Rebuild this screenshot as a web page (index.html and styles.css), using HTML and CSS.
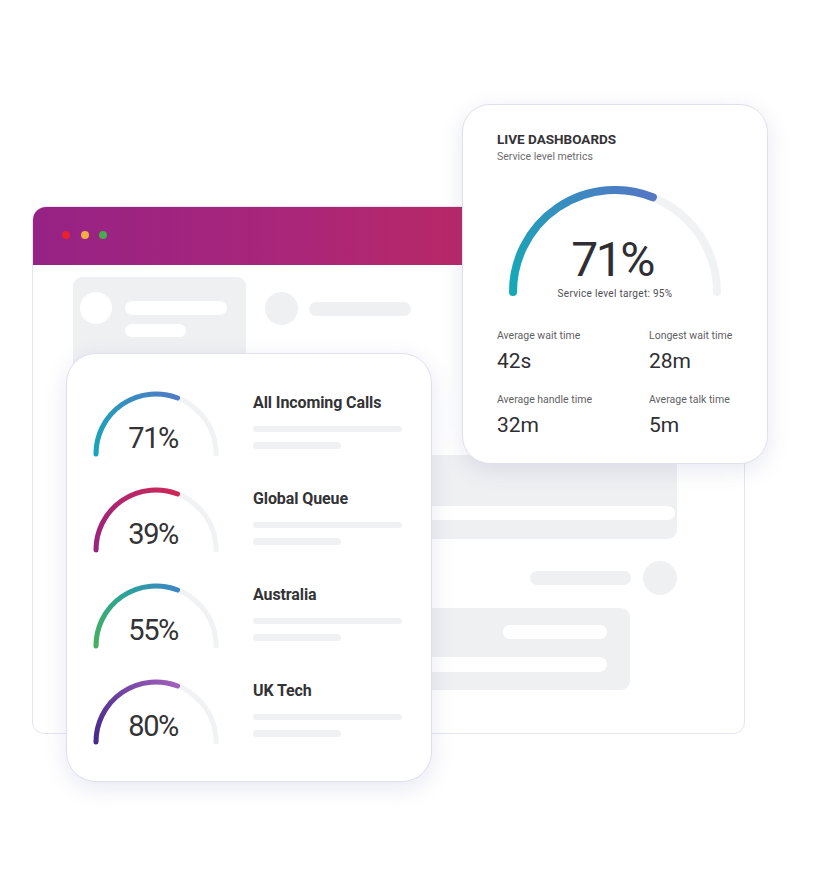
FILE: index.html
```html
<!DOCTYPE html>
<html lang="en">
<head>
<meta charset="utf-8">
<title>Live Dashboards</title>
<link rel="stylesheet" href="styles.css">
</head>
<body>
<div class="stage">

  <div class="window">
    <div class="titlebar">
      <span class="dot red"></span><span class="dot amber"></span><span class="dot green"></span>
    </div>
    <div class="win-body">
      <div class="row-a">
        <div class="skel-card">
          <span class="circle white"></span>
          <div class="skel-lines">
            <span class="bar white w102"></span>
            <span class="bar white w61"></span>
          </div>
        </div>
        <div class="avatar-row">
          <span class="circle gray"></span>
          <span class="bar gray w102"></span>
        </div>
      </div>
      <div class="bubble-left">
        <span class="bar white wide"></span>
      </div>
      <div class="row-c">
        <span class="bar gray w101"></span>
        <span class="circle gray big"></span>
      </div>
      <div class="bubble-right">
        <span class="bar white w104"></span>
        <span class="bar white wide2"></span>
      </div>
    </div>
  </div>

  <div class="card card-left">
    <div class="queue">
      <div class="mini-gauge">
        <svg width="130" height="68" viewBox="0 0 130 68">
          <defs><linearGradient id="g1" gradientUnits="userSpaceOnUse" x1="5" y1="64" x2="87" y2="8"><stop offset="0" stop-color="#17a6b8"/><stop offset="1" stop-color="#4e7cc5"/></linearGradient></defs>
          <path d="M5 64 A60 60 0 0 1 125 64" class="track-s"/>
          <path d="M5 64 A60 60 0 0 1 86.5 8" stroke="url(#g1)" class="prog-s"/>
        </svg>
        <span class="mini-val">71%</span>
      </div>
      <div class="queue-info">
        <div class="queue-name">All Incoming Calls</div>
        <span class="line l1"></span>
        <span class="line l2"></span>
      </div>
    </div>
    <div class="queue">
      <div class="mini-gauge">
        <svg width="130" height="68" viewBox="0 0 130 68">
          <defs><linearGradient id="g2" gradientUnits="userSpaceOnUse" x1="5" y1="64" x2="87" y2="8"><stop offset="0" stop-color="#99237f"/><stop offset="1" stop-color="#cc2858"/></linearGradient></defs>
          <path d="M5 64 A60 60 0 0 1 125 64" class="track-s"/>
          <path d="M5 64 A60 60 0 0 1 86.5 8" stroke="url(#g2)" class="prog-s"/>
        </svg>
        <span class="mini-val">39%</span>
      </div>
      <div class="queue-info">
        <div class="queue-name">Global Queue</div>
        <span class="line l1"></span>
        <span class="line l2"></span>
      </div>
    </div>
    <div class="queue">
      <div class="mini-gauge">
        <svg width="130" height="68" viewBox="0 0 130 68">
          <defs><linearGradient id="g3" gradientUnits="userSpaceOnUse" x1="5" y1="64" x2="87" y2="8"><stop offset="0" stop-color="#45b060"/><stop offset="0.55" stop-color="#2aa39a"/><stop offset="1" stop-color="#3b86c4"/></linearGradient></defs>
          <path d="M5 64 A60 60 0 0 1 125 64" class="track-s"/>
          <path d="M5 64 A60 60 0 0 1 86.5 8" stroke="url(#g3)" class="prog-s"/>
        </svg>
        <span class="mini-val">55%</span>
      </div>
      <div class="queue-info">
        <div class="queue-name">Australia</div>
        <span class="line l1"></span>
        <span class="line l2"></span>
      </div>
    </div>
    <div class="queue">
      <div class="mini-gauge">
        <svg width="130" height="68" viewBox="0 0 130 68">
          <defs><linearGradient id="g4" gradientUnits="userSpaceOnUse" x1="5" y1="64" x2="87" y2="8"><stop offset="0" stop-color="#46298a"/><stop offset="1" stop-color="#a05fba"/></linearGradient></defs>
          <path d="M5 64 A60 60 0 0 1 125 64" class="track-s"/>
          <path d="M5 64 A60 60 0 0 1 86.5 8" stroke="url(#g4)" class="prog-s"/>
        </svg>
        <span class="mini-val">80%</span>
      </div>
      <div class="queue-info">
        <div class="queue-name">UK Tech</div>
        <span class="line l1"></span>
        <span class="line l2"></span>
      </div>
    </div>
  </div>

  <div class="card card-right">
    <div class="dash-title">LIVE DASHBOARDS</div>
    <div class="dash-sub">Service level metrics</div>
    <div class="big-gauge">
      <svg width="216" height="112" viewBox="0 0 216 112">
        <defs><linearGradient id="gb" gradientUnits="userSpaceOnUse" x1="6" y1="106" x2="146" y2="11"><stop offset="0" stop-color="#15a9b6"/><stop offset="1" stop-color="#5377c5"/></linearGradient></defs>
        <path d="M6 106 A102 102 0 0 1 210 106" class="track-b"/>
        <path d="M6 106 A102 102 0 0 1 145.9 11.3" stroke="url(#gb)" class="prog-b"/>
      </svg>
      <div class="big-text">
        <span class="big-val">71%</span>
        <span class="big-target">Service level target: 95%</span>
      </div>
    </div>
    <div class="metrics">
      <div class="metric"><span class="m-label">Average wait time</span><span class="m-val">42s</span></div>
      <div class="metric"><span class="m-label">Longest wait time</span><span class="m-val">28m</span></div>
      <div class="metric"><span class="m-label">Average handle time</span><span class="m-val">32m</span></div>
      <div class="metric"><span class="m-label">Average talk time</span><span class="m-val">5m</span></div>
    </div>
  </div>

</div>
</body>
</html>
```

FILE: styles.css
```css
* { box-sizing: border-box; margin: 0; padding: 0; }

html, body {
  background: #ffffff;
}

body {
  margin: 0;
  font-family: Roboto, "Liberation Sans", sans-serif;
  color: #2f2f33;
}

.stage {
  position: relative;
  width: 840px;
  height: 882px;
  overflow: hidden;
}

/* ---------- background window ---------- */
.window {
  position: absolute;
  left: 32px;
  top: 206px;
  width: 713px;
  height: 528px;
  background: #ffffff;
  border: 1px solid #e4e5ef;
  border-radius: 14px 14px 12px 12px;
  overflow: hidden;
}

.titlebar {
  height: 58px;
  background: linear-gradient(90deg, #962285 0%, #a9267a 35%, #b92866 62%, #c42a5a 100%);
  display: flex;
  align-items: center;
  gap: 10.5px;
  padding-left: 29px;
  padding-bottom: 2px;
}

.dot {
  width: 8px;
  height: 8px;
  border-radius: 50%;
}
.dot.red { background: #e5232f; }
.dot.amber { background: #f3ad48; }
.dot.green { background: #48ab4e; }

.win-body {
  display: flex;
  flex-direction: column;
  padding-top: 12px;
}

.bar { display: block; border-radius: 8px; }
.circle { display: block; border-radius: 50%; flex: none; }
.white { background: #ffffff; }
.gray { background: #eff0f2; }

.row-a {
  display: flex;
  align-items: flex-start;
}

.skel-card {
  margin-left: 40px;
  width: 173px;
  height: 120px;
  background: #eff0f2;
  border-radius: 9px;
  display: flex;
  align-items: flex-start;
  padding: 15px 0 0 7px;
}
.skel-card .circle { width: 32px; height: 32px; }
.skel-lines {
  display: flex;
  flex-direction: column;
  gap: 9px;
  margin-left: 13px;
  padding-top: 9px;
}
.w102 { width: 102px; height: 14px; }
.w61 { width: 61px; height: 13px; }

.avatar-row {
  display: flex;
  align-items: center;
  margin-left: 19px;
  margin-top: 15px;
  gap: 11px;
}
.avatar-row .circle { width: 33px; height: 33px; }

.bubble-left {
  margin-left: 232px;
  margin-top: 58px;
  width: 412px;
  height: 84px;
  background: #eff0f2;
  border-radius: 9px;
  padding: 51px 0 0 40px;
}
.bar.wide { width: 370px; height: 14px; }

.row-c {
  display: flex;
  align-items: center;
  justify-content: flex-end;
  gap: 12px;
  margin-top: 22px;
  padding-right: 67px;
}
.w101 { width: 101px; height: 14px; }
.circle.big { width: 34px; height: 34px; }

.bubble-right {
  align-self: flex-end;
  margin-right: 114px;
  margin-top: 13px;
  width: 365px;
  height: 82px;
  background: #eff0f2;
  border-radius: 9px;
  display: flex;
  flex-direction: column;
  align-items: flex-end;
  padding: 17px 23px 0 0;
  gap: 18px;
}
.w104 { width: 104px; height: 14px; }
.bar.wide2 { width: 300px; height: 15px; }

/* ---------- cards ---------- */
.card {
  position: absolute;
  background: #ffffff;
  border: 1px solid #dfe0ee;
  box-shadow: 0 6px 22px rgba(88, 92, 160, 0.14);
}

.card-left {
  left: 66px;
  top: 353px;
  width: 366px;
  height: 429px;
  border-radius: 30px;
  padding: 36px 0 0 24px;
  display: flex;
  flex-direction: column;
}

.queue {
  display: flex;
  height: 96px;
}

.mini-gauge {
  display: grid;
  width: 130px;
  height: 68px;
}
.mini-gauge > * { grid-area: 1 / 1; }
.track-s { fill: none; stroke: #f1f2f4; stroke-width: 5; stroke-linecap: round; }
.prog-s { fill: none; stroke-width: 5; stroke-linecap: round; }

.mini-val {
  align-self: end;
  justify-self: center;
  margin: 0 6px 5px 0;
  font-size: 29px;
  line-height: 30px;
  font-weight: 400;
  letter-spacing: -1.5px;
  color: #333336;
}

.queue-info {
  margin-left: 32px;
  display: flex;
  flex-direction: column;
}
.queue-name {
  margin-top: 3px;
  font-size: 16px;
  line-height: 20px;
  font-weight: 700;
  letter-spacing: -0.1px;
  color: #333336;
}
.line { display: block; background: #f0f1f3; border-radius: 4px; }
.line.l1 { width: 149px; height: 6px; margin-top: 13px; }
.line.l2 { width: 88px; height: 7px; margin-top: 10px; }

.card-right {
  left: 462px;
  top: 104px;
  width: 306px;
  height: 360px;
  border-radius: 28px;
  padding: 26px 34px 0 34px;
  display: flex;
  flex-direction: column;
}

.dash-title {
  font-size: 13.5px;
  line-height: 16px;
  font-weight: 700;
  letter-spacing: 0;
  color: #333336;
}
.dash-sub {
  margin-top: 3px;
  font-size: 10.5px;
  line-height: 14px;
  color: #6c6c70;
}

.big-gauge {
  display: grid;
  align-self: center;
  width: 216px;
  height: 112px;
  margin-top: 22px;
}
.big-gauge > * { grid-area: 1 / 1; }
.track-b { fill: none; stroke: #f1f2f4; stroke-width: 8; stroke-linecap: round; }
.prog-b { fill: none; stroke-width: 8; stroke-linecap: round; }

.big-text {
  align-self: end;
  justify-self: center;
  display: flex;
  flex-direction: column;
  align-items: center;
  margin-bottom: -2px;
}
.big-val {
  font-size: 48px;
  line-height: 40px;
  font-weight: 400;
  letter-spacing: -2.5px;
  color: #2f2f33;
  margin-right: 6px;
}
.big-target {
  margin-top: 8px;
  font-size: 10px;
  line-height: 12px;
  letter-spacing: 0.3px;
  color: #505055;
}

.metrics {
  display: grid;
  grid-template-columns: 152px 1fr;
  row-gap: 20px;
  margin-top: 31px;
}
.metric {
  display: flex;
  flex-direction: column;
}
.m-label {
  font-size: 10.5px;
  line-height: 14px;
  color: #5f5f64;
}
.m-val {
  margin-top: 6px;
  font-size: 21px;
  line-height: 24px;
  color: #2f2f33;
}
```
